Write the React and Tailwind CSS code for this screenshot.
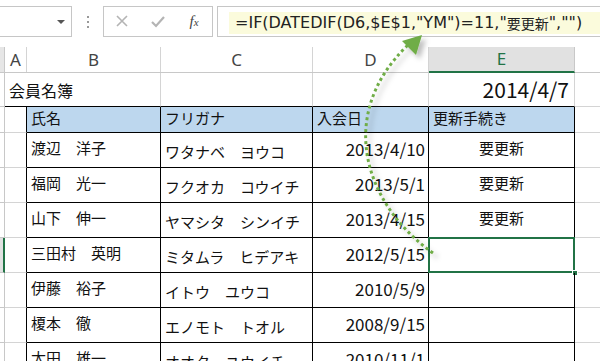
import React from 'react';

const jp = { fontFamily: '"Noto Sans CJK JP", "Noto Sans", sans-serif' };
const formulaFont = { fontFamily: '"DejaVu Sans", "Noto Sans CJK JP", sans-serif' };

const members = [
  { name: '渡辺　洋子', kana: 'ワタナベ　ヨウコ', date: '2013/4/10', status: '要更新' },
  { name: '福岡　光一', kana: 'フクオカ　コウイチ', date: '2013/5/1', status: '要更新' },
  { name: '山下　伸一', kana: 'ヤマシタ　シンイチ', date: '2013/4/15', status: '要更新' },
  { name: '三田村　英明', kana: 'ミタムラ　ヒデアキ', date: '2012/5/15', status: '', selected: true },
  { name: '伊藤　裕子', kana: 'イトウ　ユウコ', date: '2010/5/9', status: '' },
  { name: '榎本　徹', kana: 'エノモト　トオル', date: '2008/9/15', status: '' },
  { name: '太田　雄一', kana: 'オオタ　ユウイチ', date: '2010/11/1', status: '' },
];

function Toolbar() {
  return (
    <div className="flex items-start pt-[6px] h-[47px]">
      <div className="w-[72px] h-[31px] border-y border-r border-[#c6c6c6] flex items-center justify-end pr-[6px]">
        <span className="w-0 h-0 border-x-[4px] border-x-transparent border-t-[4px] border-t-[#555]" />
      </div>
      <div className="w-[31px] h-[31px] flex flex-col items-center justify-center gap-[3px]">
        <span className="w-[2px] h-[2px] bg-[#999]" />
        <span className="w-[2px] h-[2px] bg-[#999]" />
        <span className="w-[2px] h-[2px] bg-[#999]" />
      </div>
      <div className="w-[110px] h-[31px] border border-[#c6c6c6] flex items-center">
        <svg width="36" height="31" viewBox="0 0 36 31">
          <path d="M13 10 L23 20 M23 10 L13 20" stroke="#b4b4b4" strokeWidth="1.6" />
        </svg>
        <svg width="36" height="31" viewBox="0 0 36 31">
          <path d="M12 16 L16 20 L24 11" stroke="#b4b4b4" strokeWidth="2.2" fill="none" />
        </svg>
        <span className="w-[36px] text-center text-[15px] italic text-[#444]" style={{ fontFamily: '"Liberation Serif", serif' }}>
          f<span className="text-[11px]">x</span>
        </span>
      </div>
      <div className="flex-1 ml-[4px] h-[31px] border-y border-l border-[#c6c6c6] pt-[5px] pl-[11px]">
        <div className="h-[22px] bg-[#fbfbdc] flex items-center pl-[6px] text-[16px] text-[#222] whitespace-nowrap" style={formulaFont}>
          =IF(DATEDIF(D6,$E$1,"YM")=11,"<span className="text-[14px]" style={jp}>要更新</span>","")
        </div>
      </div>
    </div>
  );
}

function ColumnHeader() {
  return (
    <div className="flex h-[26px] border-b border-[#c8c8c8] text-[17px] text-[#444]" style={{ fontFamily: '"Noto Sans", sans-serif' }}>
      <div className="w-[5px] bg-[#e6e6e6] border-r border-[#c8c8c8]" />
      <div className="w-[22px] border-r border-[#d4d4d4] flex items-center justify-center">A</div>
      <div className="w-[134px] border-r border-[#d4d4d4] flex items-center justify-center">B</div>
      <div className="w-[152px] border-r border-[#d4d4d4] flex items-center justify-center">C</div>
      <div className="w-[116px] border-r border-[#d4d4d4] flex items-center justify-center">D</div>
      <div className="w-[146px] bg-[#e1e1e1] border-r border-[#c8c8c8] border-b-2 border-b-[#217346] -mb-px flex items-center justify-center text-[#217346]">E</div>
      <div className="flex-1" />
    </div>
  );
}

function TitleRow() {
  return (
    <div className="flex h-[34px]" style={jp}>
      <div className="w-[5px] border-r border-b border-[#c8c8c8]" />
      <div className="w-[156px] border-r border-b border-[#d4d4d4] border-b-black flex items-center pl-[5px] text-[16px] text-[#111]">
        <span className="-ml-[1px]">会員名簿</span>
      </div>
      <div className="w-[152px] border-r border-b border-[#d4d4d4] border-b-black" />
      <div className="w-[116px] border-r border-b border-[#d4d4d4] border-b-black" />
      <div className="w-[146px] border-r border-b border-[#d4d4d4] border-b-black flex items-center justify-end pr-[5px] text-[21px] text-[#111]">
        2014/4/7
      </div>
      <div className="flex-1 border-b border-[#d4d4d4]" />
    </div>
  );
}

function TableHead() {
  return (
    <div className="flex h-[26px] text-[15px] text-[#111]" style={jp}>
      <div className="w-[5px] border-r border-b border-[#c8c8c8]" />
      <div className="w-[22px] border-r border-r-black border-b border-b-[#d4d4d4]" />
      <div className="w-[134px] bg-[#bdd7ee] border-r border-b border-black flex items-center pl-[4px] pb-[3px]">氏名</div>
      <div className="w-[152px] bg-[#bdd7ee] border-r border-b border-black flex items-center pl-[4px] pb-[3px]">フリガナ</div>
      <div className="w-[116px] bg-[#bdd7ee] border-r border-b border-black flex items-center pl-[4px] pb-[3px]">入会日</div>
      <div className="w-[146px] bg-[#bdd7ee] border-r border-b border-black flex items-center pl-[4px] pb-[3px]">更新手続き</div>
      <div className="flex-1 border-b border-[#d4d4d4]" />
    </div>
  );
}

function DataRow({ m }) {
  return (
    <div className="flex h-[35px] text-[15px] text-[#111] shrink-0" style={jp}>
      {m.selected ? (
        <div className="w-[5px] bg-[#e1e1e1] border-r-2 border-[#217346] border-b border-b-[#c8c8c8]" />
      ) : (
        <div className="w-[5px] border-r border-b border-[#c8c8c8]" />
      )}
      <div className="w-[22px] border-r border-r-black border-b border-b-[#d4d4d4]" />
      <div className="w-[134px] border-r border-b border-black flex items-center pl-[4px] pb-[4px]">{m.name}</div>
      <div className="w-[152px] border-r border-b border-black flex items-center pl-[4px] pt-[5px]">{m.kana}</div>
      <div className="w-[116px] border-r border-b border-black flex items-center justify-end pr-[3px] pb-[2px] text-[17px]">{m.date}</div>
      <div className="relative w-[146px] border-r border-b border-black flex items-center justify-center pb-[4px]">
        {m.status}
        {m.selected && (
          <>
            <div className="absolute -left-px -top-px right-[-1px] bottom-[-1px] border-2 border-[#217346]" />
            <div className="absolute right-[-4px] bottom-[-4px] w-[6px] h-[6px] bg-[#217346] border border-white" />
          </>
        )}
      </div>
      <div className="flex-1 border-b border-[#d4d4d4]" />
    </div>
  );
}

function Arrow() {
  return (
    <svg className="absolute left-0 top-0 pointer-events-none" width="600" height="361" viewBox="0 0 600 361">
      <defs>
        <filter id="sh" x="-20%" y="-20%" width="140%" height="140%">
          <feDropShadow dx="4" dy="4" stdDeviation="2.5" floodColor="#000" floodOpacity="0.25" />
        </filter>
      </defs>
      <g filter="url(#sh)">
        <path d="M433 253 C 365 205, 335 115, 408 45" fill="none" stroke="#70ad47" strokeWidth="3" strokeDasharray="3 3" />
        <polygon points="422,35 402,41 416,55" fill="#70ad47" />
      </g>
    </svg>
  );
}

export default function App() {
  return (
    <div className="relative w-[600px] h-[361px] overflow-hidden bg-white">
      <Toolbar />
      <ColumnHeader />
      <TitleRow />
      <TableHead />
      {members.map((m, i) => (
        <DataRow key={i} m={m} />
      ))}
      <Arrow />
    </div>
  );
}
